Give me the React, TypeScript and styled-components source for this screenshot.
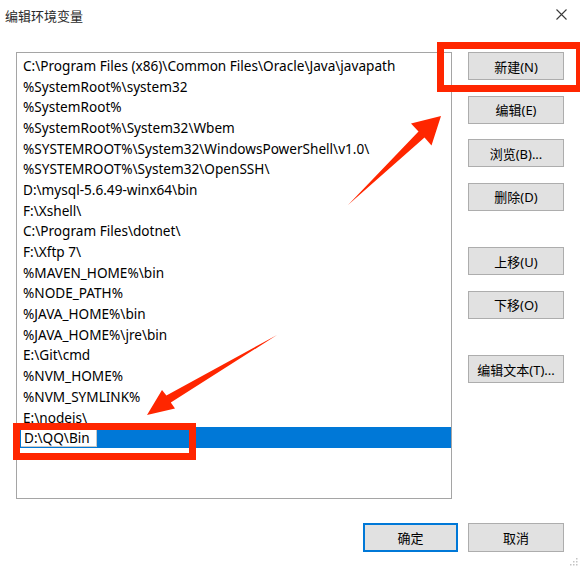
import styled, { createGlobalStyle } from "styled-components";

const GlobalStyle = createGlobalStyle`
  html, body {
    margin: 0;
    padding: 0;
    background: #ffffff;
  }
  body {
    font-family: "Noto Sans", "Noto Sans CJK SC", sans-serif;
  }
`;

const RED = "#ff2600";
const SELECT_BLUE = "#0078d7";

const Window = styled.div`
  position: relative;
  width: 580px;
  height: 568px;
  background: #ffffff;
  display: flex;
  flex-direction: column;
  overflow: hidden;
`;

const TitleBar = styled.div`
  height: 30px;
  display: flex;
  align-items: center;
  justify-content: space-between;
  padding: 0 13px 0 5px;
`;

const Title = styled.span`
  font-family: "Noto Sans CJK SC", sans-serif;
  font-size: 13px;
  color: #2a2a2a;
`;

const CloseButton = styled.div`
  width: 12px;
  height: 12px;
  display: flex;
  align-items: center;
  justify-content: center;
  margin-top: -2px;
`;

const Body = styled.div`
  display: flex;
  gap: 16px;
  padding: 22px 16px 0 16px;
`;

const ListBox = styled.div`
  width: 436px;
  height: 447px;
  box-sizing: border-box;
  border: 1px solid #a5a5a5;
  padding-top: 2px;
  display: flex;
  flex-direction: column;
`;

const Row = styled.div<{ $selected?: boolean }>`
  height: 20.7px;
  flex: none;
  display: flex;
  align-items: center;
  padding-left: ${(p) => (p.$selected ? "4px" : "6px")};
  background: ${(p) => (p.$selected ? SELECT_BLUE : "transparent")};
  font-size: 13.6px;
  color: #000000;
  white-space: nowrap;
`;

const EditBox = styled.div`
  width: 76px;
  height: 18px;
  box-sizing: border-box;
  background: #ffffff;
  border-right: 1px solid #c8c8c8;
  border-bottom: 1px solid #c8c8c8;
  padding-left: 3px;
  display: flex;
  align-items: center;
  font-size: 13.6px;
  color: #000000;
`;

const ButtonColumn = styled.div`
  display: flex;
  flex-direction: column;
  gap: 36.5px;
`;

const ButtonGroup = styled.div`
  display: flex;
  flex-direction: column;
  gap: 15.5px;
`;

const SideButton = styled.div`
  width: 96px;
  height: 28px;
  box-sizing: border-box;
  background: #e1e1e1;
  border: 1px solid #adadad;
  display: flex;
  align-items: center;
  justify-content: center;
  font-family: "Noto Sans", "Noto Sans CJK SC", sans-serif;
  font-size: 13px;
  color: #000000;
`;

const Footer = styled.div`
  display: flex;
  justify-content: flex-end;
  gap: 10px;
  padding: 24px 16px 0 0;
`;

const DialogButton = styled.div<{ $primary?: boolean }>`
  width: ${(p) => (p.$primary ? "95px" : "96px")};
  height: 29px;
  box-sizing: border-box;
  background: #e1e1e1;
  border: ${(p) => (p.$primary ? `2px solid ${SELECT_BLUE}` : "1px solid #adadad")};
  display: flex;
  align-items: center;
  justify-content: center;
  font-family: "Noto Sans CJK SC", sans-serif;
  font-size: 13px;
  color: #000000;
`;

const Grip = styled.svg`
  position: absolute;
  right: 2px;
  bottom: 2px;
`;

/* screenshot annotations drawn over the dialog */
const Marker = styled.div<{ $x: number; $y: number; $w: number; $h: number }>`
  position: absolute;
  left: ${(p) => p.$x}px;
  top: ${(p) => p.$y}px;
  width: ${(p) => p.$w}px;
  height: ${(p) => p.$h}px;
  box-sizing: border-box;
  border: 7px solid ${RED};
  pointer-events: none;
`;

const ArrowLayer = styled.svg`
  position: absolute;
  left: 0;
  top: 0;
  pointer-events: none;
`;

const paths = [
  "C:\\Program Files (x86)\\Common Files\\Oracle\\Java\\javapath",
  "%SystemRoot%\\system32",
  "%SystemRoot%",
  "%SystemRoot%\\System32\\Wbem",
  "%SYSTEMROOT%\\System32\\WindowsPowerShell\\v1.0\\",
  "%SYSTEMROOT%\\System32\\OpenSSH\\",
  "D:\\mysql-5.6.49-winx64\\bin",
  "F:\\Xshell\\",
  "C:\\Program Files\\dotnet\\",
  "F:\\Xftp 7\\",
  "%MAVEN_HOME%\\bin",
  "%NODE_PATH%",
  "%JAVA_HOME%\\bin",
  "%JAVA_HOME%\\jre\\bin",
  "E:\\Git\\cmd",
  "%NVM_HOME%",
  "%NVM_SYMLINK%",
  "E:\\nodejs\\",
];

const buttonGroups = [
  ["新建(N)", "编辑(E)", "浏览(B)...", "删除(D)"],
  ["上移(U)", "下移(O)"],
  ["编辑文本(T)..."],
];

export default function App() {
  return (
    <>
      <GlobalStyle />
      <Window>
        <TitleBar>
          <Title>编辑环境变量</Title>
          <CloseButton>
            <svg width="11" height="11" viewBox="0 0 11 11">
              <path d="M0.5 0.5 L10.5 10.5 M10.5 0.5 L0.5 10.5" stroke="#3a3a3a" strokeWidth="1.1" fill="none" />
            </svg>
          </CloseButton>
        </TitleBar>

        <Body>
          <ListBox>
            {paths.map((p) => (
              <Row key={p}>{p}</Row>
            ))}
            <Row $selected>
              <EditBox>D:\QQ\Bin</EditBox>
            </Row>
          </ListBox>

          <ButtonColumn>
            {buttonGroups.map((group, i) => (
              <ButtonGroup key={i}>
                {group.map((label) => (
                  <SideButton key={label}>{label}</SideButton>
                ))}
              </ButtonGroup>
            ))}
          </ButtonColumn>
        </Body>

        <Footer>
          <DialogButton $primary>确定</DialogButton>
          <DialogButton>取消</DialogButton>
        </Footer>

        <Grip width="10" height="10" viewBox="0 0 10 10">
          <rect x="8" y="2" width="1.5" height="1.5" fill="#c4c4c4" />
          <rect x="5" y="5" width="1.5" height="1.5" fill="#c4c4c4" />
          <rect x="8" y="5" width="1.5" height="1.5" fill="#c4c4c4" />
          <rect x="2" y="8" width="1.5" height="1.5" fill="#c4c4c4" />
          <rect x="5" y="8" width="1.5" height="1.5" fill="#c4c4c4" />
          <rect x="8" y="8" width="1.5" height="1.5" fill="#c4c4c4" />
        </Grip>

        <Marker $x={437} $y={42} $w={146} $h={50} />
        <Marker $x={13} $y={423} $w={183} $h={37} />

        <ArrowLayer width="580" height="568" viewBox="0 0 580 568">
          <polygon
            points="348,205 418.5,131.5 411,123.5 441,116 431.5,145.5 424.5,137.5"
            fill={RED}
          />
          <polygon
            points="277,335 170.8,402.6 175,408.5 147,415 162,390 166.4,395.6"
            fill={RED}
          />
        </ArrowLayer>
      </Window>
    </>
  );
}
